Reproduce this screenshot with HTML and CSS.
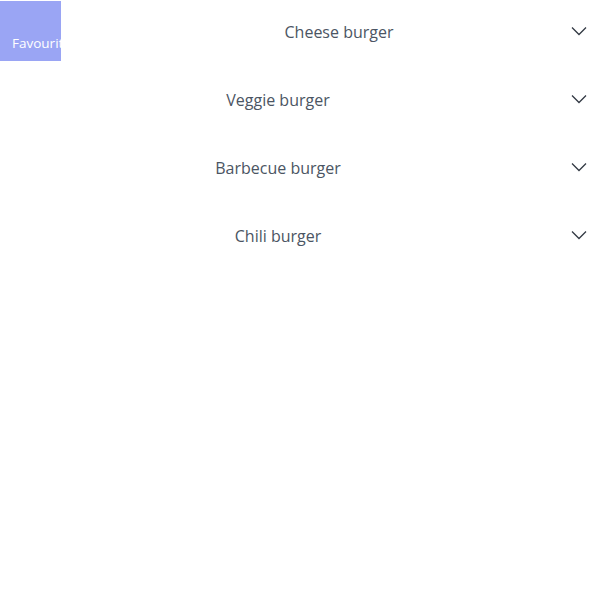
FILE: index.html
```html
<!DOCTYPE html>
<html>
<head>
<meta charset="utf-8">
<link rel="stylesheet" href="styles.css">
</head>
<body>
<div class="fav">Favourite</div>
<ul class="list">
  <li class="row row-first"><span class="label">Cheese burger</span><svg class="chev" viewBox="0 0 16 10"><path d="M1 1.5 L8 8.5 L15 1.5"/></svg></li>
  <li class="row"><span class="label">Veggie burger</span><svg class="chev" viewBox="0 0 16 10"><path d="M1 1.5 L8 8.5 L15 1.5"/></svg></li>
  <li class="row"><span class="label">Barbecue burger</span><svg class="chev" viewBox="0 0 16 10"><path d="M1 1.5 L8 8.5 L15 1.5"/></svg></li>
  <li class="row"><span class="label">Chili burger</span><svg class="chev" viewBox="0 0 16 10"><path d="M1 1.5 L8 8.5 L15 1.5"/></svg></li>
</ul>
</body>
</html>
```
FILE: styles.css
```css
html, body {
  margin: 0;
  padding: 0;
  background: #fff;
  font-family: "Open Sans", "Noto Sans", sans-serif;
}
body {
  position: relative;
  width: 600px;
  height: 593px;
  overflow: hidden;
}
.fav {
  position: absolute;
  left: 0;
  top: 1px;
  width: 61px;
  height: 60px;
  background: #9aa5f4;
  color: #fff;
  font-size: 13.5px;
  box-sizing: border-box;
  padding: 33px 0 0 12px;
  white-space: nowrap;
  overflow: hidden;
  z-index: 2;
}
.list {
  list-style: none;
  margin: 0;
  padding: 0;
}
.row {
  display: flex;
  align-items: center;
  height: 68px;
  box-sizing: border-box;
  padding: 0 0 4px 0;
}
.row-first {
  padding-left: 122px;
}
.label {
  flex: 1;
  text-align: center;
  font-size: 16px;
  color: #4b5563;
}
.chev {
  width: 16px;
  height: 10px;
  margin: 0 13px 2px 15px;
  fill: none;
  stroke: #333a44;
  stroke-width: 1.3;
}
```
